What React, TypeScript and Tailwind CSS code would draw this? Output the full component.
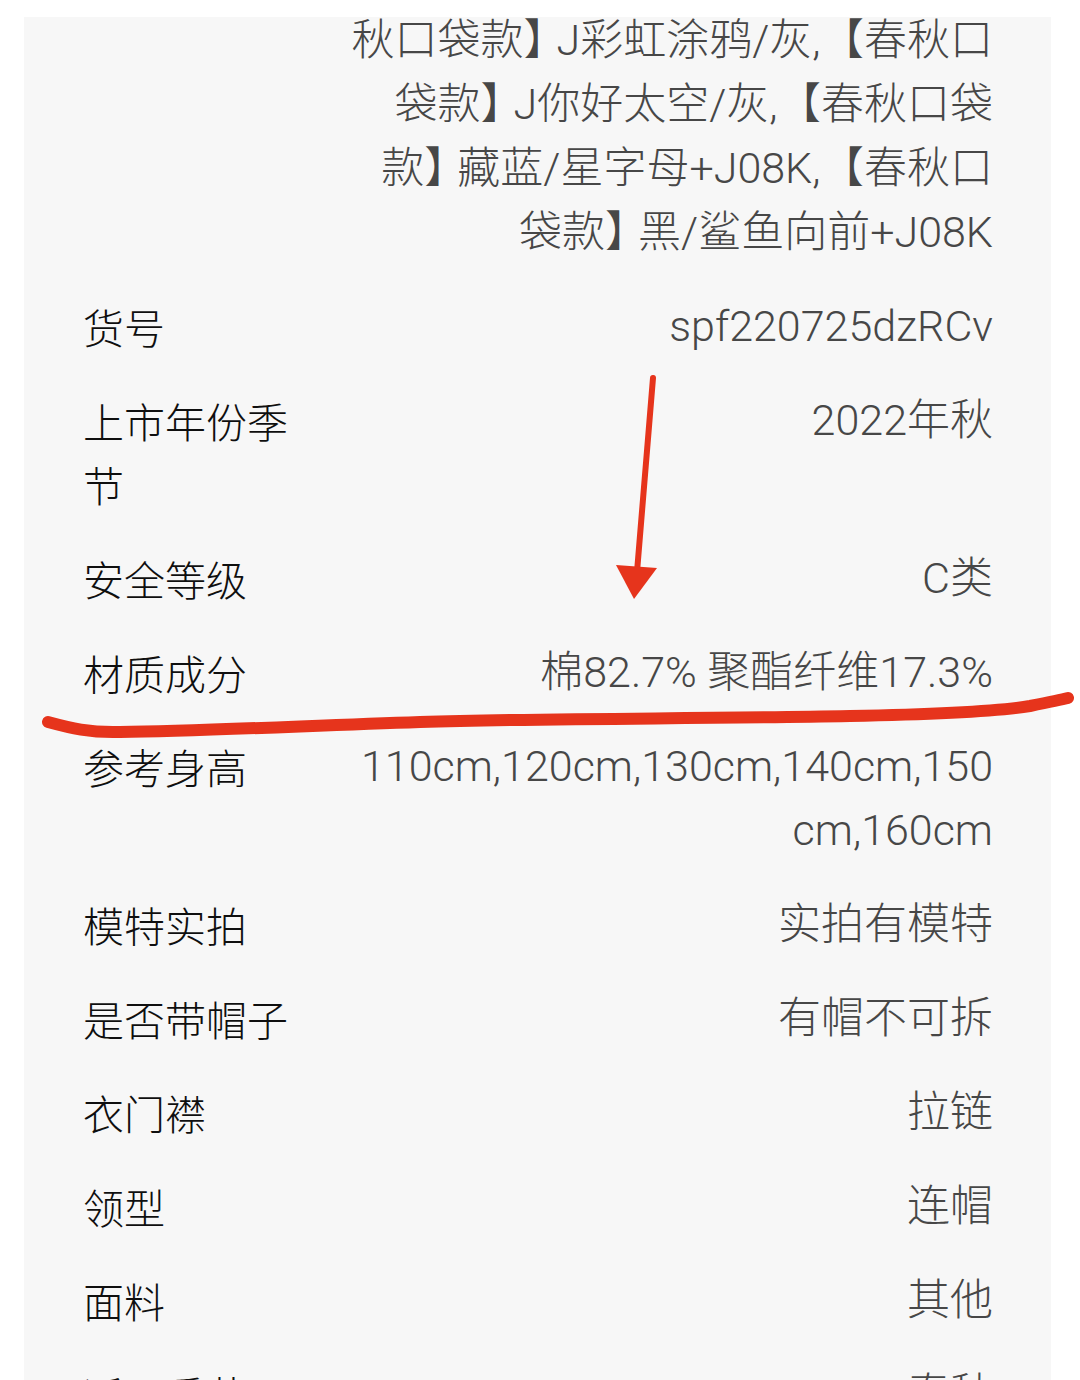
import React from "react";

type Row = { label: string[]; value: React.ReactNode[] };

const L = () => <span className="-ml-[10px]">【</span>;
const R = () => <span className="-mr-[10px]">】</span>;

const rows: Row[] = [
  {
    label: [""],
    value: [
      <>秋口袋款<R />J彩虹涂鸦/灰, <L />春秋口</>,
      <>袋款<R />J你好太空/灰, <L />春秋口袋</>,
      <>款<R />藏蓝/星字母+J08K, <L />春秋口</>,
      <>袋款<R />黑/鲨鱼向前+J08K</>,
    ],
  },
  { label: ["货号"], value: ["spf220725dzRCv"] },
  { label: ["上市年份季", "节"], value: ["2022年秋"] },
  { label: ["安全等级"], value: ["C类"] },
  { label: ["材质成分"], value: ["棉82.7% 聚酯纤维17.3%"] },
  { label: ["参考身高"], value: ["110cm,120cm,130cm,140cm,150", "cm,160cm"] },
  { label: ["模特实拍"], value: ["实拍有模特"] },
  { label: ["是否带帽子"], value: ["有帽不可拆"] },
  { label: ["衣门襟"], value: ["拉链"] },
  { label: ["领型"], value: ["连帽"] },
  { label: ["面料"], value: ["其他"] },
  { label: ["适用季节"], value: ["春秋"] },
];

export default function App() {
  return (
    <div className="relative w-[1080px] h-[1380px] overflow-hidden bg-white pt-[17px] pl-[24px] pr-[29px]">
      <div className="h-[1363px] overflow-hidden bg-[#f7f7f7] pl-[59px] pr-[58px]">
        <div className="-mt-[24px] flex flex-col">
          {rows.map((r, i) => (
            <div key={i} className="flex py-[15px] leading-[64px]">
              <div
                className="w-[215px] shrink-0 text-[41px] font-light text-[#0f0f0f]"
                style={{ fontFamily: "'Noto Sans CJK SC', sans-serif" }}
              >
                {r.label.map((l, j) => (
                  <div key={j} className="h-[64px] whitespace-nowrap">
                    {l}
                  </div>
                ))}
              </div>
              <div
                className="flex-1 text-right text-[43px] font-light text-[#474747]"
                style={{ fontFamily: "Roboto, 'Noto Sans CJK SC', sans-serif" }}
              >
                {r.value.map((v, j) => (
                  <div key={j} className="h-[64px] whitespace-nowrap">
                    {v}
                  </div>
                ))}
              </div>
            </div>
          ))}
        </div>
      </div>
      <svg
        className="pointer-events-none absolute left-0 top-0"
        width="1080"
        height="1380"
        viewBox="0 0 1080 1380"
      >
        <path d="M 653 378 L 637 572" stroke="#e6341c" strokeWidth="6" strokeLinecap="round" fill="none" />
        <polygon points="616,565 657,568 634,599" fill="#e6341c" />
        <path
          d="M 48 722 C 70 728, 90 733, 120 732 C 200 731, 300 726, 420 722 C 550 718, 700 719, 850 716 C 950 714, 1000 711, 1030 706 C 1050 702, 1060 700, 1068 698"
          stroke="#e6341c"
          strokeWidth="12"
          strokeLinecap="round"
          fill="none"
        />
      </svg>
    </div>
  );
}
